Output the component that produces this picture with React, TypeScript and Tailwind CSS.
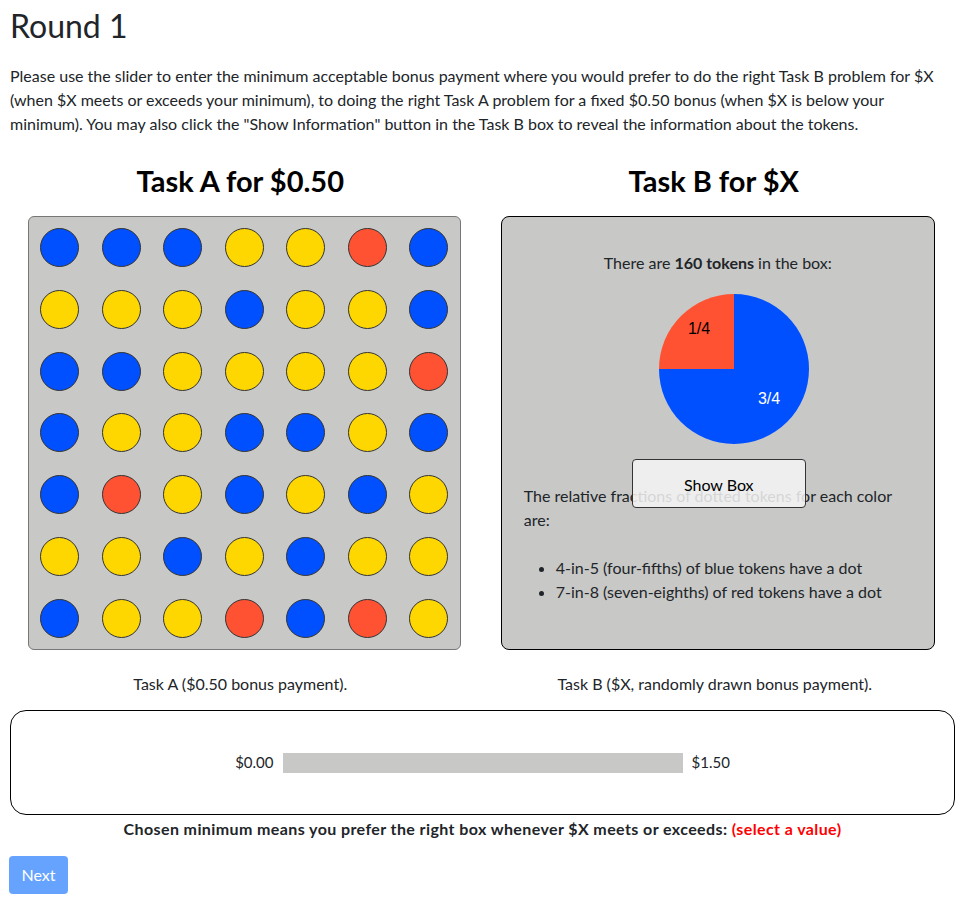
import React from "react";

const B = "#0050ff";
const Y = "#ffd700";
const R = "#ff5233";

const grid: string[][] = [
  [B, B, B, Y, Y, R, B],
  [Y, Y, Y, B, Y, Y, B],
  [B, B, Y, Y, Y, Y, R],
  [B, Y, Y, B, B, Y, B],
  [B, R, Y, B, Y, B, Y],
  [Y, Y, B, Y, B, Y, Y],
  [B, Y, Y, R, B, R, Y],
];

export default function App() {
  return (
    <div
      className="pl-[10px] pr-[6px] text-[#212529] bg-white min-h-[905px]"
      style={{ fontFamily: "Lato, 'Open Sans', sans-serif" }}
    >
      <h1 className="text-[32px] leading-[38px] font-normal pt-[7px]">Round 1</h1>
      <p className="text-[16px] leading-[24px] mt-[19px]">
        Please use the slider to enter the minimum acceptable bonus payment where you would prefer to do the right Task B problem for $X
        <br />
        (when $X meets or exceeds your minimum), to doing the right Task A problem for a fixed $0.50 bonus (when $X is below your
        <br />
        minimum). You may also click the "Show Information" button in the Task B box to reveal the information about the tokens.
      </p>

      <div className="grid grid-cols-2 mt-[28px]">
        <div className="flex flex-col items-center">
          <h2 className="text-[29px] font-bold leading-[34px] text-black mr-[12px]">Task A for $0.50</h2>
          <div className="mt-[18px] w-[433px] h-[434px] bg-[#c8c8c6] border border-[#777] rounded-[6px] grid grid-cols-7 grid-rows-7 ml-[-4px]">
            {grid.flat().map((c, i) => (
              <div key={i} className="flex items-center justify-center">
                <div
                  className="w-[39px] h-[39px] rounded-full border border-[#333]"
                  style={{ backgroundColor: c }}
                />
              </div>
            ))}
          </div>
          <div className="mt-[23px] text-[16px] leading-[22px] mr-[12px]">Task A ($0.50 bonus payment).</div>
        </div>

        <div className="flex flex-col items-center">
          <h2 className="text-[29px] font-bold leading-[34px] text-black mr-[10px]">Task B for $X</h2>
          <div className="relative mt-[18px] w-[434px] h-[434px] bg-[#c8c8c6] border border-black rounded-[8px] px-[22px] pt-[34px] ml-[-2px]">
            <div className="text-center text-[16px] leading-[24px]">
              There are <b>160 tokens</b> in the box:
            </div>
            <div className="flex justify-center mt-[19px] ml-[32px]">
              <svg width="150" height="150" viewBox="0 0 150 150">
                <path d="M75 75 L75 0 A75 75 0 1 1 0 75 Z" fill="#0050ff" />
                <path d="M75 75 L75 0 A75 75 0 0 0 0 75 Z" fill="#ff5233" />
                <text x="40" y="40" textAnchor="middle" fontSize="16" fill="#000" style={{ fontFamily: "'Liberation Sans', Arial, sans-serif" }}>1/4</text>
                <text x="110" y="110" textAnchor="middle" fontSize="16" fill="#fff" style={{ fontFamily: "'Liberation Sans', Arial, sans-serif" }}>3/4</text>
              </svg>
            </div>
            <p className="mt-[40px] text-[16px] leading-[24px] pr-[20px]">
              The relative fractions of dotted tokens for each color are:
            </p>
            <ul className="mt-[24px] list-disc pl-[32px] text-[16px] leading-[24px]">
              <li>4-in-5 (four-fifths) of blue tokens have a dot</li>
              <li>7-in-8 (seven-eighths) of red tokens have a dot</li>
            </ul>
            <button className="absolute left-[130px] top-[242px] w-[174px] h-[49px] rounded-[4px] border border-[#333] bg-[rgba(245,245,245,0.85)] text-[16px] text-black pt-[2px]">
              Show Box
            </button>
          </div>
          <div className="mt-[23px] text-[16px] leading-[22px] mr-[8px]">Task B ($X, randomly drawn bonus payment).</div>
        </div>
      </div>

      <div className="mt-[15px] h-[105px] border border-black rounded-[16px] flex items-center justify-center gap-[9px] text-[15px]">
        <span>$0.00</span>
        <div className="w-[400px] h-[20px] bg-[#c8c8c6]" />
        <span>$1.50</span>
      </div>
      <div className="text-center font-bold text-[16px] tracking-[0.4px] leading-[24px] mt-[2px]">
        Chosen minimum means you prefer the right box whenever $X meets or exceeds: <span className="text-[#ff0000]">(select a value)</span>
      </div>
      <button className="mt-[15px] ml-[-1px] w-[59px] h-[38px] rounded-[4px] bg-[#66a3ff] text-white text-[16px]">
        Next
      </button>
    </div>
  );
}
